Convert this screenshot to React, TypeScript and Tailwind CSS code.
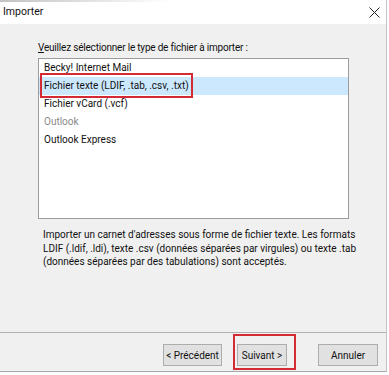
import React from 'react';

const formats = [
  { label: 'Becky! Internet Mail' },
  { label: 'Fichier texte (LDIF, .tab, .csv, .txt)', selected: true },
  { label: 'Fichier vCard (.vcf)' },
  { label: 'Outlook', disabled: true },
  { label: 'Outlook Express' },
];

const font = { fontFamily: 'Roboto, "Noto Sans", sans-serif' };

export default function App() {
  return (
    <div className="w-[389px] h-[375px] bg-white text-[#111] text-[10px]" style={font}>
      <div className="w-[387px] h-[372px] flex flex-col bg-[#f0f0f0] border-r border-[#c4c4c4] border-b border-b-[#a8a8a8]">
        {/* --- barre de titre --- */}
        <div className="relative h-[24px] bg-white flex items-center pl-[3px] text-[10.5px]">
          <div className="absolute top-0 left-0 w-[170px] h-[2px] bg-linear-to-r from-[#c2c2c2] to-white" />
          <span>Importer</span>
          <svg className="ml-auto mr-[6px]" width="11" height="11" viewBox="0 0 11 11">
            <path d="M0.5 0.5 L10.5 10.5 M10.5 0.5 L0.5 10.5" stroke="#222" strokeWidth="1" fill="none" />
          </svg>
        </div>

        {/* --- contenu --- */}
        <div className="flex-1 pl-[38px] pt-[16px]">
          <div className="leading-[16px] tracking-[-0.2px]">
            <span className="underline">V</span>euillez sélectionner le type de fichier à importer :
          </div>
          <div className="relative mt-[2px] w-[311px] h-[161px] bg-white border border-[#9c9c9c]">
            {formats.map((f) => (
              <div
                key={f.label}
                className={`h-[18px] leading-[18px] pl-[5px] ${f.selected ? 'bg-[#cce8ff]' : ''} ${f.disabled ? 'text-[#8a8a8a]' : ''}`}
              >
                {f.label}
              </div>
            ))}
            <div className="absolute left-[1px] top-[14px] w-[153px] h-[25px] border-2 border-[#d42a33]" />
          </div>
          <p className="mt-[9px] pl-[5px] leading-[13.5px] whitespace-nowrap">
            Importer un carnet d'adresses sous forme de fichier texte. Les formats
            <br />
            LDIF (.ldif, .ldi), texte .csv (données séparées par virgules) ou texte .tab
            <br />
            (données séparées par des tabulations) sont acceptés.
          </p>
        </div>

        {/* --- boutons --- */}
        <div className="h-[39px] border-t border-[#b0b0b0] flex items-start pt-[11px] pl-[163px]">
          <button className="w-[59px] h-[22px] px-0 whitespace-nowrap bg-[#e1e1e1] border border-[#adadad]">&lt; Précédent</button>
          <div className="relative ml-[15px]">
            <button className="w-[50px] h-[22px] px-0 whitespace-nowrap bg-[#e1e1e1] border border-[#adadad]">Suivant &gt;</button>
            <div className="absolute left-[-4px] top-[-10px] w-[63px] h-[36px] border-2 border-[#d42a33]" />
          </div>
          <button className="ml-[31px] w-[60px] h-[22px] px-0 whitespace-nowrap bg-[#e1e1e1] border border-[#adadad]">Annuler</button>
        </div>
      </div>
    </div>
  );
}
